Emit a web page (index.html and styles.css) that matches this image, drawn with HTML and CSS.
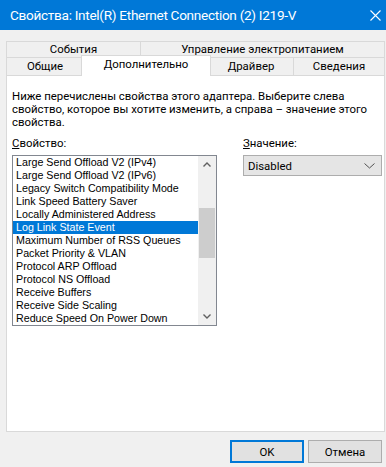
FILE: index.html
```html
<!DOCTYPE html>
<html>
<head>
    <title>Свойства: Intel(R) Ethernet Connection (2) I219-V</title>
    <link rel="stylesheet" href="styles.css">
</head>
<body>
    <div class="window">
        <div class="titlebar">
            <span class="title">Свойства: Intel(R) Ethernet Connection (2) I219-V</span>
            <svg class="close" width="11" height="11" viewBox="0 0 11 11">
                <path d="M0.5 0.5 L10.5 10.5 M10.5 0.5 L0.5 10.5" stroke="#ffffff" stroke-width="1.1" fill="none"/>
            </svg>
        </div>

        <div class="tabs">
            <div class="tab-row back">
                <div class="tab tab-events">События</div>
                <div class="tab tab-power">Управление электропитанием</div>
            </div>
            <div class="tab-row front">
                <div class="tab tab-general">Общие</div>
                <div class="tab tab-advanced active">Дополнительно</div>
                <div class="tab tab-driver">Драйвер</div>
                <div class="tab tab-details">Сведения</div>
            </div>
        </div>

        <div class="panel">
            <p class="desc">Ниже перечислены свойства этого адаптера. Выберите слева<br>свойство, которое вы хотите изменить, а справа – значение этого<br>свойства.</p>

            <div class="fields">
                <div class="field">
                    <div class="label"><u>С</u>войство:</div>
                    <div class="listbox">
                        <ul class="items">
                            <li>Large Send Offload V2 (IPv4)</li>
                            <li>Large Send Offload V2 (IPv6)</li>
                            <li>Legacy Switch Compatibility Mode</li>
                            <li>Link Speed Battery Saver</li>
                            <li>Locally Administered Address</li>
                            <li class="selected">Log Link State Event</li>
                            <li>Maximum Number of RSS Queues</li>
                            <li>Packet Priority &amp; VLAN</li>
                            <li>Protocol ARP Offload</li>
                            <li>Protocol NS Offload</li>
                            <li>Receive Buffers</li>
                            <li>Receive Side Scaling</li>
                            <li>Reduce Speed On Power Down</li>
                        </ul>
                        <div class="scrollbar">
                            <div class="arrow">
                                <svg width="8" height="5" viewBox="0 0 8 5"><path d="M0.5 4.5 L4 1 L7.5 4.5" stroke="#606060" stroke-width="1.4" fill="none"/></svg>
                            </div>
                            <div class="track">
                                <div class="thumb"></div>
                            </div>
                            <div class="arrow">
                                <svg width="8" height="5" viewBox="0 0 8 5"><path d="M0.5 0.5 L4 4 L7.5 0.5" stroke="#606060" stroke-width="1.4" fill="none"/></svg>
                            </div>
                        </div>
                    </div>
                </div>

                <div class="field">
                    <div class="label"><u>З</u>начение:</div>
                    <div class="select">
                        <span>Disabled</span>
                        <svg width="11" height="6" viewBox="0 0 11 6"><path d="M0.5 0.5 L5.5 5 L10.5 0.5" stroke="#505050" stroke-width="1" fill="none"/></svg>
                    </div>
                </div>
            </div>
        </div>

        <div class="buttons">
            <div class="btn default">OK</div>
            <div class="btn">Отмена</div>
        </div>
    </div>
</body>
</html>
```

FILE: styles.css
```css
* {
    box-sizing: border-box;
}

body {
    margin: 0;
    font-family: Roboto, "Liberation Sans", sans-serif;
    font-size: 11.4px;
    color: #000;
    background: #f0f0f0;
}

.window {
    width: 386px;
    height: 467px;
    background: #f0f0f0;
    display: flex;
    flex-direction: column;
}

.titlebar {
    height: 30px;
    background: #0078d7;
    color: #fff;
    display: flex;
    align-items: center;
    justify-content: space-between;
    padding: 0 5px 0 10px;
}

.title {
    font-size: 13.6px;
    letter-spacing: -0.3px;
}

/* tabs */
.tabs {
    margin-top: 11px;
    padding-left: 6px;
}

.tab-row {
    display: flex;
    align-items: flex-start;
}

.tab {
    border: 1px solid #d9d9d9;
    border-bottom: none;
    margin-right: -1px;
    background: #f0f0f0;
    text-align: center;
    line-height: 15px;
}

.back .tab {
    height: 16px;
}

.front .tab {
    height: 18px;
    padding-top: 1px;
}

.tab-events { width: 135px; }
.tab-power { width: 245px; }
.tab-general { width: 78px; }
.tab-driver { width: 86px; }
.tab-details { width: 92px; }

.front .tab.active {
    position: relative;
    z-index: 1;
    width: 130px;
    height: 21px;
    margin: -2px -3px -1px -2px;
    padding-top: 1px;
    background: #fff;
}

/* panel */
.panel {
    height: 357px;
    margin: 0 1px 0 6px;
    border: 1px solid #d9d9d9;
    background: #fff;
    padding: 14px 0 0 5px;
}

.desc {
    margin: 0;
    line-height: 13px;
}

.fields {
    display: grid;
    grid-template-columns: 205px 139px;
    column-gap: 26px;
    margin-top: 8px;
}

.label {
    line-height: 13px;
    margin-bottom: 5px;
}

.listbox {
    height: 171px;
    border: 1px solid #828790;
    display: flex;
}

.items {
    list-style: none;
    margin: 0;
    padding: 0;
    flex: 1;
    font-family: "Liberation Sans", Arial, sans-serif;
    font-size: 10.7px;
}

.items li {
    height: 13px;
    line-height: 13px;
    padding-left: 3px;
    white-space: nowrap;
}

.items li.selected {
    background: #0078d7;
    color: #fff;
}

.scrollbar {
    width: 18px;
    background: #f0f0f0;
    display: flex;
    flex-direction: column;
}

.arrow {
    height: 17px;
    display: flex;
    align-items: center;
    justify-content: center;
}

.track {
    flex: 1;
    padding: 35px 1px 0 1px;
}

.thumb {
    height: 50px;
    background: #cdcdcd;
}

.select {
    height: 21px;
    border: 1px solid #adadad;
    background: #e5e5e5;
    display: flex;
    align-items: center;
    justify-content: space-between;
    padding: 0 6px 0 4px;
}

/* buttons */
.buttons {
    display: flex;
    justify-content: flex-end;
    gap: 4px;
    margin-top: 8px;
    padding-right: 4px;
}

.btn {
    width: 74px;
    height: 23px;
    border: 1px solid #adadad;
    background: #e1e1e1;
    display: flex;
    align-items: center;
    justify-content: center;
}

.btn.default {
    border: 1px solid #0078d7;
    box-shadow: inset 0 0 0 1px #0078d7;
}
```
